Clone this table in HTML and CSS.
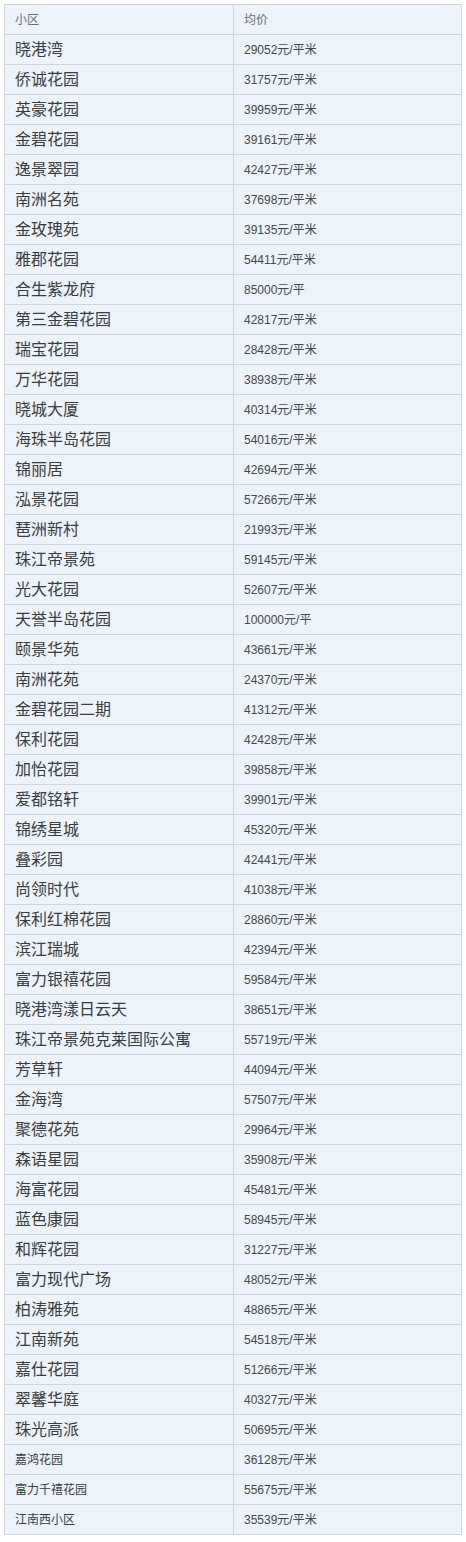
FILE: index.html
```html
<!DOCTYPE html>
<html lang="zh-CN">
<head>
<meta charset="utf-8">
<title>小区均价</title>
<link rel="stylesheet" href="styles.css">
</head>
<body>
<table class="price-table">
<thead>
<tr><th class="col-name">小区</th><th class="col-price">均价</th></tr>
</thead>
<tbody>
<tr><td class="name">晓港湾</td><td class="price">29052元/平米</td></tr>
<tr><td class="name">侨诚花园</td><td class="price">31757元/平米</td></tr>
<tr><td class="name">英豪花园</td><td class="price">39959元/平米</td></tr>
<tr><td class="name">金碧花园</td><td class="price">39161元/平米</td></tr>
<tr><td class="name">逸景翠园</td><td class="price">42427元/平米</td></tr>
<tr><td class="name">南洲名苑</td><td class="price">37698元/平米</td></tr>
<tr><td class="name">金玫瑰苑</td><td class="price">39135元/平米</td></tr>
<tr><td class="name">雅郡花园</td><td class="price">54411元/平米</td></tr>
<tr><td class="name">合生紫龙府</td><td class="price">85000元/平</td></tr>
<tr><td class="name">第三金碧花园</td><td class="price">42817元/平米</td></tr>
<tr><td class="name">瑞宝花园</td><td class="price">28428元/平米</td></tr>
<tr><td class="name">万华花园</td><td class="price">38938元/平米</td></tr>
<tr><td class="name">晓城大厦</td><td class="price">40314元/平米</td></tr>
<tr><td class="name">海珠半岛花园</td><td class="price">54016元/平米</td></tr>
<tr><td class="name">锦丽居</td><td class="price">42694元/平米</td></tr>
<tr><td class="name">泓景花园</td><td class="price">57266元/平米</td></tr>
<tr><td class="name">琶洲新村</td><td class="price">21993元/平米</td></tr>
<tr><td class="name">珠江帝景苑</td><td class="price">59145元/平米</td></tr>
<tr><td class="name">光大花园</td><td class="price">52607元/平米</td></tr>
<tr><td class="name">天誉半岛花园</td><td class="price">100000元/平</td></tr>
<tr><td class="name">颐景华苑</td><td class="price">43661元/平米</td></tr>
<tr><td class="name">南洲花苑</td><td class="price">24370元/平米</td></tr>
<tr><td class="name">金碧花园二期</td><td class="price">41312元/平米</td></tr>
<tr><td class="name">保利花园</td><td class="price">42428元/平米</td></tr>
<tr><td class="name">加怡花园</td><td class="price">39858元/平米</td></tr>
<tr><td class="name">爱都铭轩</td><td class="price">39901元/平米</td></tr>
<tr><td class="name">锦绣星城</td><td class="price">45320元/平米</td></tr>
<tr><td class="name">叠彩园</td><td class="price">42441元/平米</td></tr>
<tr><td class="name">尚领时代</td><td class="price">41038元/平米</td></tr>
<tr><td class="name">保利红棉花园</td><td class="price">28860元/平米</td></tr>
<tr><td class="name">滨江瑞城</td><td class="price">42394元/平米</td></tr>
<tr><td class="name">富力银禧花园</td><td class="price">59584元/平米</td></tr>
<tr><td class="name">晓港湾漾日云天</td><td class="price">38651元/平米</td></tr>
<tr><td class="name">珠江帝景苑克莱国际公寓</td><td class="price">55719元/平米</td></tr>
<tr><td class="name">芳草轩</td><td class="price">44094元/平米</td></tr>
<tr><td class="name">金海湾</td><td class="price">57507元/平米</td></tr>
<tr><td class="name">聚德花苑</td><td class="price">29964元/平米</td></tr>
<tr><td class="name">森语星园</td><td class="price">35908元/平米</td></tr>
<tr><td class="name">海富花园</td><td class="price">45481元/平米</td></tr>
<tr><td class="name">蓝色康园</td><td class="price">58945元/平米</td></tr>
<tr><td class="name">和辉花园</td><td class="price">31227元/平米</td></tr>
<tr><td class="name">富力现代广场</td><td class="price">48052元/平米</td></tr>
<tr><td class="name">柏涛雅苑</td><td class="price">48865元/平米</td></tr>
<tr><td class="name">江南新苑</td><td class="price">54518元/平米</td></tr>
<tr><td class="name">嘉仕花园</td><td class="price">51266元/平米</td></tr>
<tr><td class="name">翠馨华庭</td><td class="price">40327元/平米</td></tr>
<tr><td class="name">珠光高派</td><td class="price">50695元/平米</td></tr>
<tr><td class="name small">嘉鸿花园</td><td class="price">36128元/平米</td></tr>
<tr><td class="name small">富力千禧花园</td><td class="price">55675元/平米</td></tr>
<tr><td class="name small">江南西小区</td><td class="price">35539元/平米</td></tr>
</tbody>
</table>
</body>
</html>
```
FILE: styles.css
```css
html, body {
  margin: 0;
  padding: 0;
  background: #ffffff;
}

body {
  padding: 4px 4px 0 4px;
  font-family: "Liberation Sans", "Noto Sans CJK SC", sans-serif;
}

.price-table {
  width: 458px;
  border-collapse: collapse;
  table-layout: fixed;
  background: #edf3fa;
}

.price-table th,
.price-table td {
  border: 1px solid #cdd5de;
  height: 30px;
  padding: 0 0 0 10px;
  text-align: left;
  vertical-align: middle;
  box-sizing: border-box;
  line-height: 18px;
}

.price-table th {
  font-weight: normal;
  font-size: 12px;
  color: #6a6e73;
}

.col-name {
  width: 229px;
}

.name {
  font-size: 16px;
  color: #3a3d40;
}

.name.small {
  font-size: 12px;
}

.price {
  font-size: 12px;
  color: #45484b;
  padding-top: 3px;
}
```
